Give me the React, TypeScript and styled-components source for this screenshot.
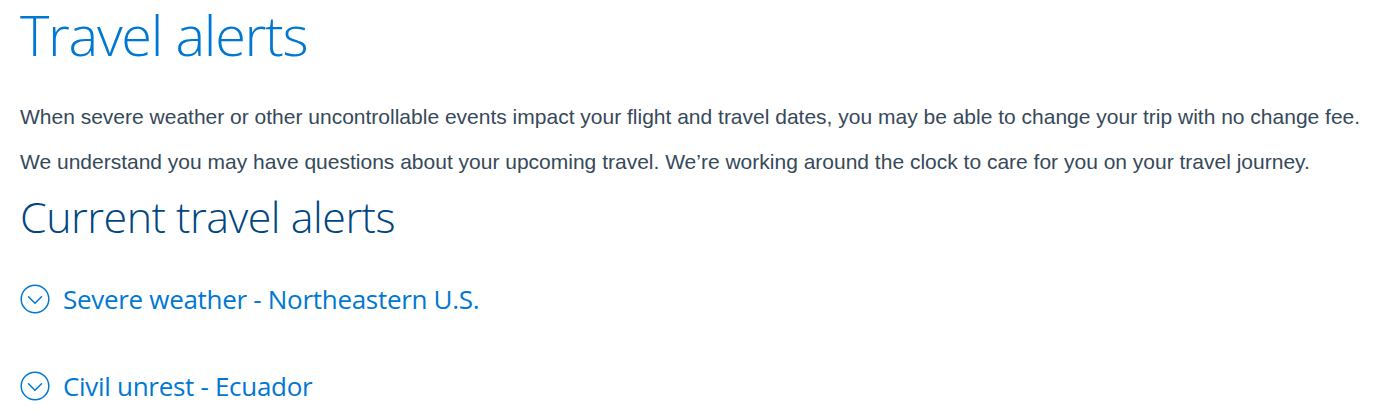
import React from "react";
import styled, { createGlobalStyle } from "styled-components";

const GlobalStyle = createGlobalStyle`
  html, body { margin: 0; padding: 0; background: #ffffff; }
  body { -webkit-font-smoothing: antialiased; }
`;

const Page = styled.main`
  display: flex;
  flex-direction: column;
  align-items: flex-start;
  padding: 0 20px;
  width: 1400px;
  height: 420px;
  box-sizing: border-box;
  overflow: hidden;
`;

const Title = styled.h1`
  margin: 0;
  font-family: "Open Sans", "Noto Sans", sans-serif;
  font-weight: 300;
  font-size: 56px;
  line-height: 68px;
  letter-spacing: -1.3px;
  color: #0078d2;
`;

const Paragraph = styled.p<{ $gap: number }>`
  margin: ${(p) => p.$gap}px 0 0 0;
  font-family: "Liberation Sans", Arial, sans-serif;
  font-size: 21px;
  line-height: 28px;
  color: #36495a;
`;

const SectionTitle = styled.h2`
  margin: 15px 0 0 0;
  font-family: "Open Sans", "Noto Sans", sans-serif;
  font-weight: 300;
  font-size: 43px;
  line-height: 52px;
  letter-spacing: -0.5px;
  color: #00467f;
`;

const AlertList = styled.ul`
  list-style: none;
  margin: 40px 0 0 0;
  padding: 0;
  display: flex;
  flex-direction: column;
  gap: 55px;
`;

const AlertToggle = styled.button`
  display: flex;
  align-items: center;
  gap: 13px;
  padding: 0;
  border: 0;
  background: none;
  cursor: pointer;
  font-family: "Open Sans", "Noto Sans", sans-serif;
  font-weight: 400;
  font-size: 26px;
  line-height: 32px;
  letter-spacing: -0.3px;
  color: #0078d2;
`;

const ToggleIcon = styled.svg`
  width: 30px;
  height: 30px;
  flex: none;
`;

const ChevronCircle = () => (
  <ToggleIcon viewBox="0 0 30 30" fill="none" stroke="#0078d2" strokeWidth={1.5}>
    <circle cx="15" cy="15" r="13.8" />
    <polyline points="8.5,12.8 15,19.3 21.5,12.8" strokeLinecap="round" strokeLinejoin="round" />
  </ToggleIcon>
);

const alerts = ["Severe weather - Northeastern U.S.", "Civil unrest - Ecuador"];

export default function App() {
  return (
    <>
      <GlobalStyle />
      <Page>
        <Title>Travel alerts</Title>
        <Paragraph $gap={35}>
          When severe weather or other uncontrollable events impact your flight and travel dates, you may be able to change your trip with no change fee.
        </Paragraph>
        <Paragraph $gap={17}>
          We understand you may have questions about your upcoming travel. We’re working around the clock to care for you on your travel journey.
        </Paragraph>
        <SectionTitle>Current travel alerts</SectionTitle>
        <AlertList>
          {alerts.map((a) => (
            <li key={a}>
              <AlertToggle type="button">
                <ChevronCircle />
                {a}
              </AlertToggle>
            </li>
          ))}
        </AlertList>
      </Page>
    </>
  );
}
